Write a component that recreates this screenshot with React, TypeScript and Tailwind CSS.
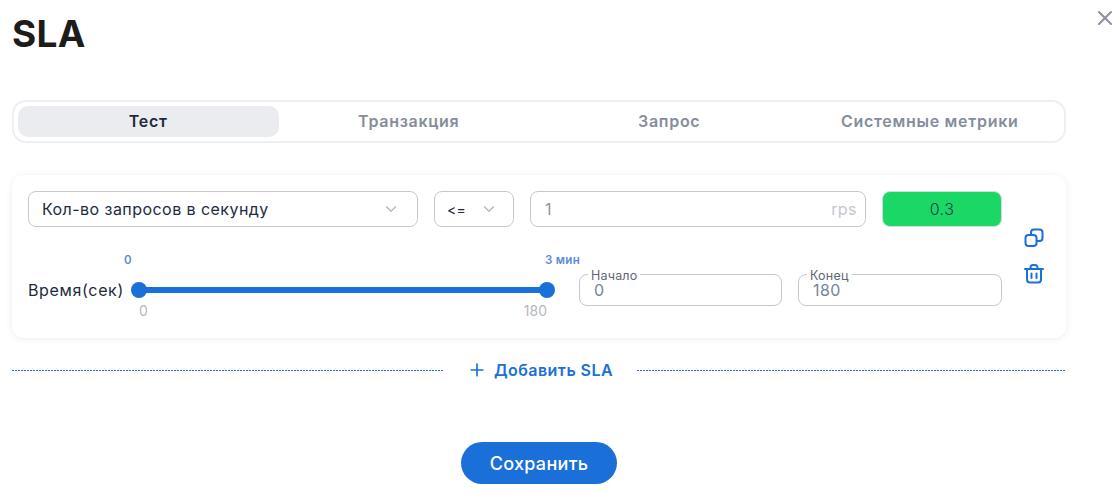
import { ChevronDown, Plus, X } from 'lucide-react'

const FONT = "font-['Inter','Noto_Sans',sans-serif]"
const TABS = ['Тест', 'Транзакция', 'Запрос', 'Системные метрики']

function Select({ label, className }: { label: string; className: string }) {
  return (
    <div className={`flex h-9 shrink-0 items-center justify-between rounded-lg border border-[#c3c8d2] ${className}`}>
      {label}
      <ChevronDown className="h-[18px] w-[18px] text-[#b5bac4]" strokeWidth={2} />
    </div>
  )
}

function Field({ label, value, className }: { label: string; value: string; className: string }) {
  return (
    <div className={`relative h-8 rounded-lg border border-[#c3c8d2] pl-[14px] pt-[6px] text-[16px] leading-[18px] tracking-[0.4px] text-[#76839b] ${className}`}>
      <span className="absolute -top-[5px] left-[8px] bg-white px-[3px] text-[12.5px] leading-[11px] tracking-[0.2px] text-[#5f6675]">
        {label}
      </span>
      {value}
    </div>
  )
}

function Dashes({ className }: { className: string }) {
  return (
    <div className={`h-px bg-[repeating-linear-gradient(90deg,#1a6fd9_0,#1a6fd9_2px,transparent_2px,transparent_3px)] ${className}`} />
  )
}

function CopyIcon() {
  return (
    <svg width="20" height="20" viewBox="0 0 20 20" fill="none" stroke="#1a6fd9" strokeWidth="2">
      <rect x="1.5" y="7" width="11" height="11" rx="3" />
      <path d="M7 6.5V4.5a3 3 0 0 1 3-3h5.5a3 3 0 0 1 3 3V10a3 3 0 0 1-3 3h-2.5" />
    </svg>
  )
}

function TrashIcon() {
  return (
    <svg width="20" height="20" viewBox="0 0 20 20" fill="none" stroke="#1a6fd9" strokeWidth="2" strokeLinecap="round">
      <path d="M1 5h18" />
      <path d="M3 5v10.5a3 3 0 0 0 3 3h8a3 3 0 0 0 3-3V5" />
      <path d="M6.5 5V3.5a2.5 2.5 0 0 1 2.5-2.5h2a2.5 2.5 0 0 1 2.5 2.5V5" />
      <path d="M7.5 9.5v4.5M12.5 9.5v4.5" />
    </svg>
  )
}

export default function App() {
  return (
    <div className={`relative h-[495px] w-[1120px] overflow-hidden bg-white px-3 ${FONT}`}>
      <button className="absolute left-[1093px] top-[6px] text-[#8b929e]">
        <X className="h-6 w-6" strokeWidth={2} />
      </button>

      <h1 className="pt-[12px] text-[37px] font-bold leading-[44px] tracking-[0.3px] text-[#1c1c1c]">SLA</h1>

      {/* tabs */}
      <div className="mt-[44px] grid h-[43px] w-[1054px] grid-cols-4 rounded-[14px] border-2 border-[#eeeff3] p-1 text-[16px] font-semibold tracking-[0.7px] text-[#858d9c]">
        {TABS.map((tab, i) => (
          <div
            key={tab}
            className={`flex items-center justify-center rounded-[10px] pb-0.5 ${i === 0 ? 'bg-[#ebecf0] text-[#1d2a3f]' : ''}`}
          >
            {tab}
          </div>
        ))}
      </div>

      {/* card */}
      <div className="mt-[32px] flex h-[163px] w-[1054px] rounded-xl bg-white pl-4 pt-4 shadow-[0_1px_6px_rgba(40,70,130,0.10)]">
        <div className="w-[974px]">
          <div className="flex gap-4 text-[16px] tracking-[0.45px] text-[#1d2a3f]">
            <Select label="Кол-во запросов в секунду" className="w-[390px] pl-[13px] pr-[17px]" />
            <Select label="<=" className="w-20 pl-[12px] pr-[15px] text-[14px] tracking-[0.25px]" />
            <div className="flex h-9 w-[336px] items-center justify-between rounded-lg border border-[#c3c8d2] pl-[14px] pr-2 text-[#8d95a3]">
              <span>1</span>
              <span className="text-[#c3c7cf]">rps</span>
            </div>
            <div className="flex h-9 w-[120px] items-center justify-center rounded-lg border border-[#d5dbe0] bg-[#19d866] font-light text-[#24404a]">0.3</div>
          </div>

          <div className="mt-[47px] flex items-start">
            <span className="w-[103px] pt-[4px] text-[16px] leading-[24px] tracking-[0.65px] text-[#1d2a3f]">Время(сек)</span>
            {/* slider */}
            <div className="relative h-8 w-[424px]">
              <span className="absolute -top-[21px] left-[-7px] text-[11.5px] font-semibold leading-[14px] text-[#5a8ae0]">0</span>
              <span className="absolute -top-[21px] left-[414px] whitespace-nowrap text-[11.5px] font-semibold leading-[14px] tracking-[0.3px] text-[#5a8ae0]">3 мин</span>
              <div className="absolute left-2 right-2 top-[13px] h-1.5 bg-[#1a6fd9]" />
              <div className="absolute left-0 top-2 h-4 w-4 rounded-full bg-[#1a6fd9]" />
              <div className="absolute right-0 top-2 h-4 w-4 rounded-full bg-[#1a6fd9]" />
              <span className="absolute left-2 top-[28px] text-[14px] leading-[17px] text-[#b5b8c0]">0</span>
              <span className="absolute right-2 top-[28px] text-[14px] leading-[17px] text-[#b5b8c0]">180</span>
            </div>
            <div className="ml-6 flex gap-4">
              <Field label="Начало" value="0" className="w-[203px]" />
              <Field label="Конец" value="180" className="w-[204px]" />
            </div>
          </div>
        </div>
        <div className="ml-[22px] flex flex-col gap-4 pt-[37px]">
          <CopyIcon />
          <TrashIcon />
        </div>
      </div>

      {/* add */}
      <div className="mt-[22px] flex h-[20px] w-[1054px] items-center">
        <Dashes className="w-[431px]" />
        <div className="flex w-[194px] items-center justify-center gap-[7px] text-[16px] font-semibold tracking-[0.45px] text-[#1a6fd9]">
          <Plus className="h-5 w-5" strokeWidth={2} />
          Добавить SLA
        </div>
        <Dashes className="flex-1" />
      </div>

      <div className="mt-[62px] flex w-[1054px] justify-center">
        <button className="h-[42px] w-[156px] rounded-full bg-[#1a6fd9] text-[18px] font-medium tracking-[0.3px] text-white">
          Сохранить
        </button>
      </div>
    </div>
  )
}
